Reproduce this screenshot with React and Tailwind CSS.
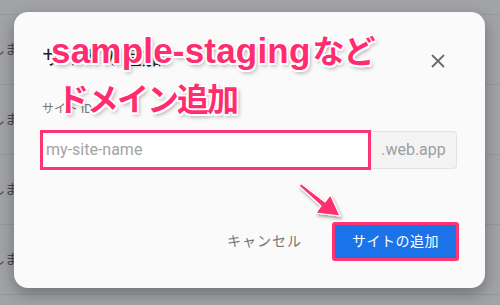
import React from "react";

const rows = [0, 1, 2, 3];

const outline =
  "[text-shadow:1.5px_0_#fff,-1.5px_0_#fff,0_1.5px_#fff,0_-1.5px_#fff,1.5px_1.5px_#fff,-1.5px_-1.5px_#fff,1.5px_-1.5px_#fff,-1.5px_1.5px_#fff,2px_3px_4px_rgba(0,0,0,0.35)]";

export default function App() {
  return (
    <div className="relative w-[500px] h-[305px] overflow-hidden bg-[#a2a3a7] font-['Roboto','Noto_Sans_CJK_JP',sans-serif]">
      {/* background page rows */}
      <div className="pt-[14px] border-b border-[#97989c]">
        {rows.map((r) => (
          <div key={r} className="h-[70px] border-t border-[#97989c] flex items-center">
            <span className="-ml-[9px] text-[14px] text-[#4a4a4c] whitespace-nowrap">しましょう</span>
          </div>
        ))}
      </div>

      {/* dialog */}
      <div className="absolute left-[14px] top-[12px] w-[471px] h-[276px] rounded-[14px] bg-[#fafafa] shadow-[0_6px_16px_rgba(0,0,0,0.3)] px-[26px] pt-[32px] flex flex-col">
        <div className="flex items-start justify-between">
          <h2 className="text-[20px] leading-[28px] text-[#212121] pl-[2px]">サイトの追加</h2>
          <svg width="16" height="16" viewBox="0 0 16 16" className="mt-[9px] mr-[13px]">
            <path d="M2 2 L14 14 M14 2 L2 14" stroke="#6b6b6b" strokeWidth="1.8" fill="none" />
          </svg>
        </div>
        <div className="mt-[30px] pl-[2px] text-[12px] leading-[14px] text-[#757575]">サイト ID</div>
        <div className="mt-[14px] flex h-[40px] w-[417px]">
          <div className="flex-1 border-[3px] border-[#ff3472] bg-white flex items-center pl-[3px] text-[16px] text-[#a3a3a3]">
            my-site-name
          </div>
          <div className="w-[86px] my-[1px] border border-l-0 border-[#e3e3e3] rounded-r-[4px] bg-[#f3f3f3] flex items-center justify-center text-[16px] text-[#9e9e9e]">
            .web.app
          </div>
        </div>
        <div className="mt-auto mb-[27px] flex items-center justify-end gap-[30px]">
          <span className="text-[14px] text-[#757575] tracking-[1px]">キャンセル</span>
          <div className="w-[127px] h-[39px] border-[3px] border-[#ff3472] rounded-[3px] bg-[#1a73e8] flex items-center justify-center text-[14px] text-white tracking-[0.5px]">
            サイトの追加
          </div>
        </div>
      </div>

      {/* annotation text */}
      <div className={`absolute left-[51px] top-[29px] font-bold text-[#ff2d6f] ${outline}`}>
        <div className="font-['Liberation_Sans',sans-serif] text-[35px] leading-[40px] tracking-[0.2px] whitespace-nowrap">
          sample-staging
          <span className="font-['Noto_Sans_CJK_JP',sans-serif] text-[32px] tracking-[-1px] ml-[2px]">など</span>
        </div>
        <div className="mt-[6px] pl-[6px] font-['Noto_Sans_CJK_JP',sans-serif] text-[32px] leading-[40px] tracking-[-2px] whitespace-nowrap">
          ドメイン追加
        </div>
      </div>

      {/* arrow */}
      <svg className="absolute left-0 top-0" width="500" height="305" viewBox="0 0 500 305">
        <defs>
          <filter id="sh" x="-50%" y="-50%" width="200%" height="200%">
            <feDropShadow dx="1.5" dy="2.5" stdDeviation="1.5" floodColor="#000" floodOpacity="0.35" />
          </filter>
        </defs>
        <g filter="url(#sh)">
          <path d="M299 186 L301 183.5 L325 202 L330.5 195 L340 216 L316 213 L321 206 Z" fill="#ff2d6f" stroke="#fff" strokeWidth="1.2" strokeLinejoin="round" />
        </g>
      </svg>
    </div>
  );
}
